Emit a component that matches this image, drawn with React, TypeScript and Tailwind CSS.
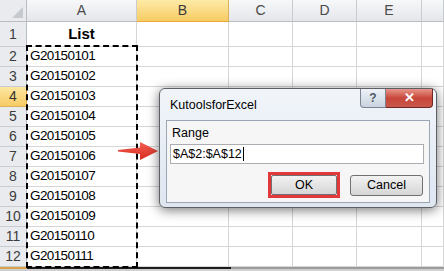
import React from "react"

const cols = ["A", "B", "C", "D", "E", ""]
const ids = [
  "G20150101", "G20150102", "G20150103", "G20150104", "G20150105", "G20150106",
  "G20150107", "G20150108", "G20150109", "G20150110", "G20150111",
]

function ColHeader({ label, active }: { label: string; active?: boolean }) {
  return (
    <div
      className={
        active
          ? "flex items-center justify-center border-r border-b border-r-[#d9b25a] border-b-[#e8a93a] bg-linear-to-b from-[#fdeaa6] to-[#f7cc62] text-[14px] text-[#3a3a3a]"
          : "flex items-center justify-center border-r border-b border-r-[#c8cbd0] border-b-[#b9bcc2] bg-linear-to-b from-[#f7f8f9] to-[#e4e6ea] text-[14px] text-[#4a4a4a]"
      }
    >
      {label}
    </div>
  )
}

function RowHeader({ n, active }: { n: number; active?: boolean }) {
  return (
    <div
      className={
        active
          ? "flex items-center justify-center border-r border-b border-r-[#e8a93a] border-b-[#d9b25a] bg-linear-to-b from-[#fde7a0] to-[#f6cb63] text-[14px] text-[#333]"
          : "flex items-center justify-center border-r border-b border-r-[#b9bcc2] border-b-[#c8cbd0] bg-[#e9ebee] text-[14px] text-[#3c3c3c]"
      }
    >
      {n}
    </div>
  )
}

function Cell({ children, bold }: { children?: React.ReactNode; bold?: boolean }) {
  return (
    <div
      className={
        bold
          ? "flex items-center justify-center border-r border-b border-[#d6d6d6] text-[15px] font-bold text-black"
          : "flex items-center border-r border-b border-[#d6d6d6] pl-[3px] text-[13.5px] tracking-[-0.6px] text-black"
      }
    >
      {children}
    </div>
  )
}

function Arrow() {
  return (
    <svg width="42" height="20" viewBox="0 0 42 20" className="absolute left-[117px] top-[141px]">
      <defs>
        <linearGradient id="ar" x1="0" y1="0" x2="0" y2="1">
          <stop offset="0" stopColor="#f26052" />
          <stop offset="1" stopColor="#d92a1f" />
        </linearGradient>
      </defs>
      <path d="M1 9 L23 6.5 L23 1 L41 10 L23 19 L23 13 L1 10.5 Z" fill="url(#ar)" />
    </svg>
  )
}

function Dialog() {
  return (
    <div className="absolute left-[159px] top-[88px] flex h-[120px] w-[278px] flex-col rounded-[6px] border border-[#5c5f66] bg-linear-to-b from-[#f1f5fa] to-[#dfe6f0] px-[6px] pb-[4px] shadow-[0_2px_12px_rgba(0,0,0,0.55)] font-['Liberation_Sans',sans-serif]">
      <div className="flex h-[31px] items-center justify-between">
        <span className="pl-[4px] pt-[1px] text-[12.5px] text-black">KutoolsforExcel</span>
        <div className="-mr-[3px] flex self-start">
          <div className="flex h-[19px] w-[26px] items-center justify-center rounded-bl-[4px] border border-t-0 border-[#7c8491] bg-linear-to-b from-[#eef2f7] to-[#c9d3df] text-[12px] font-bold text-[#4d5866]">
            ?
          </div>
          <div className="flex h-[19px] w-[47px] items-center justify-center rounded-br-[4px] border border-l-0 border-t-0 border-[#6d2a24] bg-linear-to-b from-[#e7958b] via-[#c8463a] to-[#c9574b] text-[13px] font-bold text-white">
            ✕
          </div>
        </div>
      </div>
      <div className="flex flex-1 flex-col border border-[#9aa6b5] bg-[#f6f6f6] px-[3px]">
        <span className="mt-[5px] pl-[2px] text-[12.5px] leading-[14px] text-black">Range</span>
        <div className="mt-[4px] flex h-[20px] w-[254px] items-center border border-[#abadb3] bg-white pl-[2px] text-[12.5px] text-black">
          $A$2:$A$12
          <span className="ml-[1px] inline-block h-[14px] w-px bg-black" />
        </div>
        <div className="mt-[8px] flex items-start">
          <div className="ml-[98px] border-[3px] border-[#e0383b] p-0">
            <div className="flex h-[20px] w-[66px] items-center justify-center rounded-[2px] border border-[#707070] bg-linear-to-b from-[#f2f2f2] to-[#d6d6d6] text-[12.5px] text-black">
              OK
            </div>
          </div>
          <div className="ml-[10px] mt-[3px] flex h-[21px] w-[73px] items-center justify-center rounded-[3px] border border-[#707070] bg-linear-to-b from-[#f2f2f2] to-[#d6d6d6] text-[12.5px] text-black">
            Cancel
          </div>
        </div>
      </div>
    </div>
  )
}

export default function App() {
  return (
    <div className="relative h-[271px] w-[444px] overflow-hidden bg-white font-['Liberation_Sans',sans-serif]">
      <div className="grid grid-cols-[27px_110px_92px_64px_64px_65px_22px] grid-rows-[22px_25px_repeat(11,20px)]">
        <div className="relative border-r border-b border-r-[#b9bcc2] border-b-[#b9bcc2] bg-[#e9ebee]">
          <div className="absolute bottom-[3px] right-[3px] h-0 w-0 border-l-[11px] border-t-[11px] border-l-transparent border-t-transparent border-b-0 border-r-[11px] border-r-[#c6c9ce]" />
        </div>
        {cols.map((c, i) => (
          <ColHeader key={i} label={c} active={c === "B"} />
        ))}

        <RowHeader n={1} />
        <Cell bold>List</Cell>
        <Cell /><Cell /><Cell /><Cell /><Cell />

        {ids.map((id, i) => (
          <React.Fragment key={id}>
            <RowHeader n={i + 2} active={i + 2 === 4} />
            <Cell>{id}</Cell>
            <Cell /><Cell /><Cell /><Cell /><Cell />
          </React.Fragment>
        ))}
      </div>
      <div className="flex h-[2px]">
        <div className="w-[27px] bg-[#d9a24a]" />
        <div className="w-[204px] bg-[#1c1c1c]" />
        <div className="flex-1 bg-[#9c9c9c]" />
      </div>
      <div className="h-[2px] bg-[#cfcfcf]" />

      {/* copy marquee around A2:A12 */}
      <div className="pointer-events-none absolute left-[26px] top-[45px] h-[223px] w-[112px] border-2 border-dashed border-black" />

      <Arrow />
      <Dialog />
    </div>
  )
}
